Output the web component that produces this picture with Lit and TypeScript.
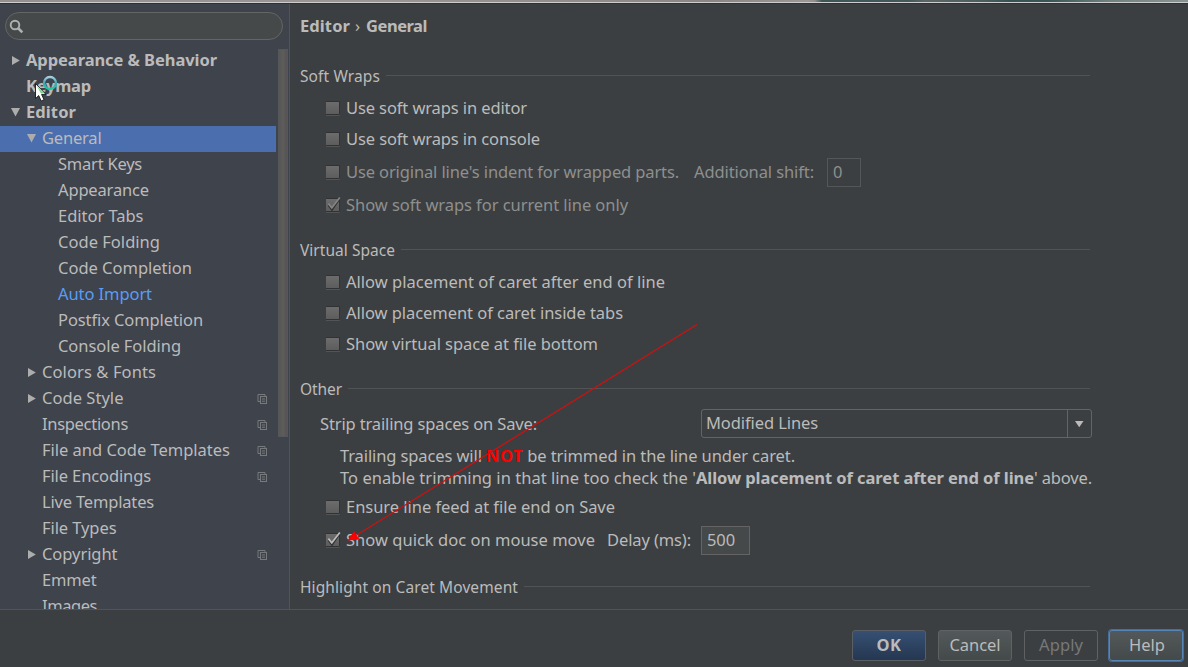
import { LitElement, html, css, svg, nothing } from "lit";
import { customElement, property, query } from "lit/decorators.js";

/** A single line of text, tracked so that it takes up the given width. */
@customElement("fit-label")
class FitLabel extends LitElement {
  @property() text = "";
  @property({ type: Number }) w = 0;
  @query("span") span!: HTMLSpanElement;

  static styles = css`
    :host { display: inline-block; white-space: pre; flex: none; }
  `;

  updated() {
    const s = this.span;
    s.style.letterSpacing = "0px";
    const natural = s.getBoundingClientRect().width;
    s.style.letterSpacing = `${(this.w - natural) / this.text.length}px`;
  }

  render() {
    return html`<span>${this.text}</span>`;
  }
}

const label = (text: string, w: number) => html`<fit-label .text=${text} .w=${w}></fit-label>`;

interface Node {
  text: string;
  w: number;
  level: number;
  open?: boolean;
  bold?: boolean;
  selected?: boolean;
  link?: boolean;
  shared?: boolean;
}

const TREE: Node[] = [
  { text: "Appearance & Behavior", w: 191, level: 0, open: false, bold: true },
  { text: "Keymap", w: 65, level: 0, bold: true },
  { text: "Editor", w: 50, level: 0, open: true, bold: true },
  { text: "General", w: 59.5, level: 1, open: true, selected: true },
  { text: "Smart Keys", w: 84, level: 2 },
  { text: "Appearance", w: 91, level: 2 },
  { text: "Editor Tabs", w: 85.5, level: 2 },
  { text: "Code Folding", w: 102, level: 2 },
  { text: "Code Completion", w: 134, level: 2 },
  { text: "Auto Import", w: 94, level: 2, link: true },
  { text: "Postfix Completion", w: 145, level: 2 },
  { text: "Console Folding", w: 123, level: 2 },
  { text: "Colors & Fonts", w: 114, level: 1, open: false },
  { text: "Code Style", w: 81.5, level: 1, open: false, shared: true },
  { text: "Inspections", w: 86, level: 1, shared: true },
  { text: "File and Code Templates", w: 188, level: 1, shared: true },
  { text: "File Encodings", w: 109, level: 1, shared: true },
  { text: "Live Templates", w: 112, level: 1 },
  { text: "File Types", w: 74.5, level: 1 },
  { text: "Copyright", w: 75.5, level: 1, open: false, shared: true },
  { text: "Emmet", w: 54.5, level: 1 },
  { text: "Images", w: 55, level: 1 },
];

@customElement("app-root")
class AppRoot extends LitElement {
  static styles = css`
    :host {
      display: flex;
      flex-direction: column;
      position: relative;
      width: 1188px;
      height: 667px;
      overflow: hidden;
      box-sizing: border-box;
      background: #3c3f41;
      color: #bbbbbb;
      font-family: "Noto Sans", "Open Sans", sans-serif;
      font-size: 16.5px;
      line-height: 22px;
    }
    * { box-sizing: border-box; }
    .strip {
      flex: none;
      height: 4px;
      background:
        linear-gradient(#2f3233, #2f3233) 0 3px / 100% 1px no-repeat,
        linear-gradient(#d2d2d2, #c8c8c8) 0 2px / 100% 1px no-repeat,
        linear-gradient(90deg, #93908f 0, #9a9695 30%, #8b8685 60%, #9b9794 68%, #8f8c8a 815px, #3e5557 822px, #45595b 910px, #5c6667 925px, #4b5d5e 985px, #365253 1010px, #3b5657 1050px, #718180 1110px, #8a9493 100%);
    }
    .body { display: flex; height: 605px; flex: none; }
    .side {
      width: 290px;
      flex: none;
      background: #3f434c;
      border-right: 1px solid #515354;
      padding-top: 8px;
      display: flex;
      flex-direction: column;
      overflow: hidden;
    }
    .search {
      margin-left: 5px;
      width: 278px;
      height: 28px;
      flex: none;
      border: 1px solid #646565;
      border-radius: 14px;
      background: #45494a;
      padding: 6px 0 0 3px;
    }
    .search svg { display: block; }
    .scroller { display: flex; margin-top: 8px; height: 561px; overflow: hidden; }
    .tree { width: 276px; flex: none; }
    .node { height: 26px; display: flex; align-items: center; line-height: 24px; padding-bottom: 2px; }
    .node.selected { background: #4b6eaf; }
    .node.bold { font-weight: 700; }
    .node.link { color: #589df6; }
    .l0 { padding-left: 10px; }
    .l1 { padding-left: 26px; }
    .l2 { padding-left: 42px; }
    .twisty { width: 16px; height: 26px; flex: none; }
    .shared { margin-left: auto; margin-right: 8.5px; width: 11px; height: 12px; margin-top: 1px; }
    .bar {
      margin: 1px 0 0 2px;
      width: 10px;
      height: 388px;
      background: linear-gradient(90deg, #565656, #5e5d5c 50%, #545252);
      border: 1px solid #565758;
    }
    .main { flex: 1; padding-left: 10px; display: flex; flex-direction: column; align-items: flex-start; overflow: hidden; }
    .title { height: 45px; line-height: 43px; font-weight: 700; display: flex; flex: none; }
    .sep { font-weight: 400; }
    .head { display: flex; flex: none; width: 790px; height: 24px; margin-top: 18px; line-height: 24px; font-size: 15.5px; align-items: center; gap: 6px; }
    .head.first { margin-top: 15px; }
    .head.last { margin-top: 20px; }
    .rule { flex: 1; height: 1px; background: #515355; margin-bottom: 2px; }
    .row { display: flex; flex: none; align-items: center; height: 30px; margin-top: 1px; padding-left: 26px; line-height: 30px; }
    .row.a { margin-top: 5px; }
    .row.b { margin-top: 3px; }
    .row.dim { color: #8e8f8f; }
    .row.strip-row { margin-top: 8px; padding-left: 20px; width: 792px; }
    .check { width: 15px; height: 18px; margin-right: 5px; flex: none; }
    .note { margin: 6px 0 0 40px; flex: none; }
    .line { display: flex; height: 22px; }
    .not { color: #ff0000; font-weight: 700; }
    .strong { font-weight: 700; }
    .field { height: 29px; line-height: 26px; border: 1px solid #646464; background: #45494a; padding-left: 5px; width: 49px; margin-left: 10px; }
    .field.off { border-color: #555657; background: none; width: 34px; margin-left: 13px; }
    .combo { margin-left: auto; width: 391px; height: 29px; display: flex; border: 1px solid #646464; border-radius: 3px; line-height: 25px; padding-left: 4px; margin-top: -2px; }
    .drop { margin-left: auto; width: 24px; border-left: 1px solid #646464; }
    .drop svg { display: block; }
    .sp12 { margin-left: 12px; }
    .sp15 { margin-left: 15px; }
    .foot { flex: 1; border-top: 1px solid #515354; display: flex; justify-content: flex-end; gap: 12px; padding: 20px 5px 0 0; }
    .btn { width: 74px; height: 31px; line-height: 28px; border: 1px solid #5f6162; border-radius: 3px; display: flex; justify-content: center; background: linear-gradient(#53585a, #44494a); }
    .btn.ok { font-weight: 700; background: linear-gradient(#365073, #253751); border-color: #5a5f65; }
    .btn.off { background: none; color: #777879; }
    .btn.help { margin-left: -1px; padding-left: 2px; border: 1px solid #5685b8; box-shadow: 0 0 0 1px #466d9c; }
    .overlay { position: absolute; left: 0; top: 0; pointer-events: none; }
  `;

  check(on = false, dim = false) {
    return html`<svg class="check" viewBox="0 0 15 18">
      <defs>
        <linearGradient id="g" x1="0" y1="0" x2="0" y2="1">
          <stop offset="0" stop-color="#6c6c6c" /><stop offset="1" stop-color="#5d5d5d" />
        </linearGradient>
      </defs>
      <rect x="-0.5" y="3" width="14.5" height="14" rx="1" fill="#525556" />
      <rect x="-0.5" y="2" width="14.5" height="14" rx="1" fill="#303233" />
      <rect x="0" y="3" width="13" height="12" fill="url(#g)" />
      ${on
        ? svg`<path d="M2.6 9 L6 13.6 L12.6 4" fill="none" stroke="#303234" stroke-width="2.2" />
             <path d="M2.4 7.6 L5.8 11.8 L13.8 1.6" fill="none" stroke=${dim ? "#858585" : "#bcbcbc"} stroke-width="1.7" />`
        : nothing}
    </svg>`;
  }

  node(n: Node) {
    const cls = `node l${n.level}${n.bold ? " bold" : ""}${n.selected ? " selected" : ""}${n.link ? " link" : ""}`;
    return html`<div class=${cls}>
      <svg class="twisty" viewBox="0 0 16 26">
        ${n.open === undefined
          ? nothing
          : n.open
            ? svg`<path d="M1 9 H10 L5.5 17.5 Z" fill="#adadad" />`
            : svg`<path d="M2 9 V18 L9.8 13.5 Z" fill="#adadad" />`}
      </svg>
      ${label(n.text, n.w)}
      ${n.shared
        ? html`<svg class="shared" viewBox="0 0 11 12">
            <path d="M3 8.5 H1 V1.5 H8 V3" fill="none" stroke="#777a7c" />
            <rect x="3.5" y="3.5" width="6" height="7" fill="none" stroke="#777a7c" />
            <path d="M5 6 H8 M5 8.2 H8" stroke="#777a7c" />
          </svg>`
        : nothing}
    </div>`;
  }

  head(text: string, w: number, extra = "") {
    return html`<div class="head ${extra}">${label(text, w)}<div class="rule"></div></div>`;
  }

  render() {
    return html`
      <div class="strip"></div>
      <div class="body">
        <div class="side">
          <div class="search">
            <svg width="16" height="16" viewBox="0 0 16 16">
              <circle cx="6" cy="6" r="4.3" fill="none" stroke="#afb1b1" stroke-width="1.9" />
              <path d="M9 9 L13.3 13.3" stroke="#afb1b1" stroke-width="2.6" />
            </svg>
          </div>
          <div class="scroller">
            <div class="tree">${TREE.map((n) => this.node(n))}</div>
            <div class="bar"></div>
          </div>
        </div>
        <div class="main">
          <div class="title">${label("Editor", 50)}<span class="sep">${label(" › ", 16)}</span>${label("General", 61)}</div>
          ${this.head("Soft Wraps", 80, "first")}
          <div class="row a">${this.check()}${label("Use soft wraps in editor", 181)}</div>
          <div class="row">${this.check()}${label("Use soft wraps in console", 194)}</div>
          <div class="row b dim">
            ${this.check()}${label("Use original line's indent for wrapped parts.", 333)}
            <div class="sp15">${label("Additional shift:", 120)}</div>
            <div class="field off">${label("0", 10)}</div>
          </div>
          <div class="row b dim">${this.check(true, true)}${label("Show soft wraps for current line only", 282)}</div>
          ${this.head("Virtual Space", 95)}
          <div class="row a">${this.check()}${label("Allow placement of caret after end of line", 319)}</div>
          <div class="row">${this.check()}${label("Allow placement of caret inside tabs", 277)}</div>
          <div class="row">${this.check()}${label("Show virtual space at file bottom", 252)}</div>
          ${this.head("Other", 42)}
          <div class="row strip-row">
            ${label("Strip trailing spaces on Save:", 217)}
            <div class="combo">
              ${label("Modified Lines", 112)}
              <div class="drop"><svg width="23" height="27" viewBox="0 0 23 27"><path d="M7 11 H15.5 L11.2 17.2 Z" fill="#bbbbbb" /></svg></div>
            </div>
          </div>
          <div class="note">
            <div class="line">${label("Trailing spaces will ", 146)}<span class="not">${label("NOT", 37)}</span>${label(" be trimmed in the line under caret.", 272)}</div>
            <div class="line">${label("To enable trimming in that line too check the '", 356)}<span class="strong">${label("Allow placement of caret after end of line", 338)}</span>${label("' above.", 58)}</div>
          </div>
          <div class="row b">${this.check()}${label("Ensure line feed at file end on Save", 269)}</div>
          <div class="row b">
            ${this.check(true)}${label("Show quick doc on mouse move", 249)}
            <div class="sp12">${label("Delay (ms):", 84)}</div>
            <div class="field">${label("500", 28)}</div>
          </div>
          ${this.head("Highlight on Caret Movement", 218, "last")}
        </div>
      </div>
      <div class="foot">
        <div class="btn ok">${label("OK", 25)}</div>
        <div class="btn">${label("Cancel", 51)}</div>
        <div class="btn off">${label("Apply", 44)}</div>
        <div class="btn help">${label("Help", 36)}</div>
      </div>
      <svg class="overlay" width="1188" height="667" viewBox="0 0 1188 667">
        <path d="M697 324.5 L356 535.5" stroke="#d01010" stroke-width="1.2" />
        <path d="M347.5 540.5 L354 531.3 L359.5 539.5 Z" fill="#ff0000" />
        <defs>
          <linearGradient id="ring" x1="0" y1="0" x2="0" y2="1">
            <stop offset="0" stop-color="#a6cfe0" /><stop offset="0.5" stop-color="#3fa5b5" /><stop offset="1" stop-color="#20c9a0" />
          </linearGradient>
        </defs>
        <circle cx="50" cy="83" r="6" fill="none" stroke="url(#ring)" stroke-width="2.4" />
        <path d="M35.5 83.5 V98.5 L38.7 95.6 L41.2 101 L44 99.7 L41.6 94.5 H46 Z" fill="#ffffff" stroke="#15181c" stroke-width="0.9" />
        <path d="M37 86.5 L44 93.4 H41 Z" fill="#6fd58c" />
      </svg>
    `;
  }
}
